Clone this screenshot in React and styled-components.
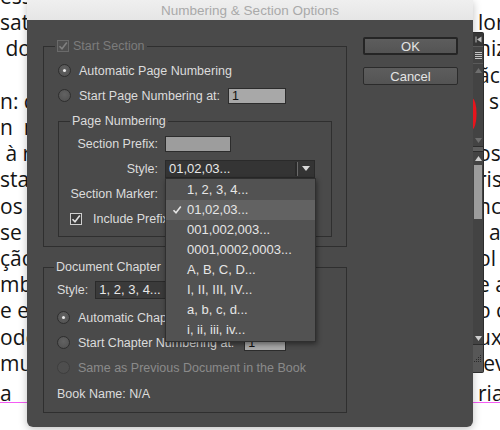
import React from 'react'
import styled, { createGlobalStyle } from 'styled-components'

const leftLines = ['esse', 'satu', ' do', '', 'n: co', 'n  m', ' à r', 'sta', 'os e', 'se c', 'ção', 'mb', 'e es', 'ode', 'mus', 'a']
const rightLines = ['', 'lor', 'niz', 'ãc', '  s', '', 'os', 'ris', 'nc', '  a', 'ol', 'e a', 'o c', 'uxe', 'lev', 'ria.']

const styles = ['1, 2, 3, 4...', '01,02,03...', '001,002,003...', '0001,0002,0003...', 'A, B, C, D...', 'I, II, III, IV...', 'a, b, c, d...', 'i, ii, iii, iv...']

const GlobalStyle = createGlobalStyle`
  html, body {
    margin: 0;
    padding: 0;
    background: #fff;
  }
  body {
    width: 500px;
    height: 430px;
    overflow: hidden;
  }
`

const Check = ({ color }) => (
  <svg width="10" height="10" viewBox="0 0 10 10">
    <path d="M1.5 5.2 L4 7.8 L8.8 1.6" fill="none" stroke={color} strokeWidth="1.6" />
  </svg>
)

const App = () => {
  return (
    <Page>
      <GlobalStyle />
      <DocText>
        {leftLines.map((line, i) => (
          <React.Fragment key={i}>
            <DocLine $last={i === leftLines.length - 1}>{line}</DocLine>
            <DocLine $last={i === leftLines.length - 1}>{rightLines[i]}</DocLine>
          </React.Fragment>
        ))}
      </DocText>
      <MagentaRule />

      <Dialog>
        <TitleBar>Numbering &amp; Section Options</TitleBar>
        <DialogBody>
          <MainColumn>
            <Group $pad="4px 14px 9px">
              <GroupLegend $shift={-3}>
                <CheckBox $disabled><Check color="#808080" /></CheckBox>
                <LegendText $disabled>Start Section</LegendText>
              </GroupLegend>
              <OptionRow><Radio $checked />Automatic Page Numbering</OptionRow>
              <OptionRow>
                <Radio />Start Page Numbering at:
                <TextBox $w={58} $gap={8}>1</TextBox>
              </OptionRow>

              <Group $top={5} $pad="2px 10px 5px 11px">
                <GroupLegend $shift={0}>Page Numbering</GroupLegend>
                <FieldRow>
                  <FieldLabel>Section Prefix:</FieldLabel>
                  <TextBox $w={66} $tone="#9d9d9d" />
                </FieldRow>
                <FieldRow>
                  <FieldLabel>Style:</FieldLabel>
                  <Dropdown>
                    <SelectBox $w={150} $dark>
                      01,02,03...
                      <ArrowZone>
                        <svg width="8" height="5" viewBox="0 0 8 5"><path d="M0 0 H8 L4 5 Z" fill="#d8d8d8" /></svg>
                      </ArrowZone>
                    </SelectBox>
                    <Menu>
                      {styles.map((s, i) => (
                        <MenuItem key={s} $active={i === 1}>
                          <MenuCheck>{i === 1 && <Check color="#e4e4e4" />}</MenuCheck>
                          {s}
                        </MenuItem>
                      ))}
                    </Menu>
                  </Dropdown>
                </FieldRow>
                <FieldRow>
                  <FieldLabel>Section Marker:</FieldLabel>
                  <TextBox $w={110} $tone="#9d9d9d" />
                </FieldRow>
                <FieldRow>
                  <CheckBox $light><Check color="#e0e0e0" /></CheckBox>
                  Include Prefix when Numbering Pages
                </FieldRow>
              </Group>
            </Group>

            <Group $top={12} $pad="4px 13px 6px">
              <GroupLegend $shift={-3}>Document Chapter Numbering</GroupLegend>
              <StyleRow>
                Style:
                <SelectBox $w={140} $gap={7}>1, 2, 3, 4...</SelectBox>
              </StyleRow>
              <OptionRow><Radio $checked />Automatic Chapter Numbering</OptionRow>
              <OptionRow>
                <Radio />Start Chapter Numbering at:
                <TextBox $w={42} $gap={10}>1</TextBox>
              </OptionRow>
              <OptionRow $disabled><Radio $disabled />Same as Previous Document in the Book</OptionRow>
              <BookRow>Book Name: N/A</BookRow>
            </Group>
          </MainColumn>

          <ButtonColumn>
            <DialogButton $primary>OK</DialogButton>
            <DialogButton>Cancel</DialogButton>
          </ButtonColumn>
        </DialogBody>
      </Dialog>

      <SideStrip>
        <StripCap>
          <svg width="7" height="7" viewBox="0 0 7 7">
            <path d="M1 0.5 V6.5" stroke="#bdbdbd" strokeWidth="1" />
            <path d="M6.5 0.5 V6.5 L2 3.5 Z" fill="#bdbdbd" />
          </svg>
        </StripCap>
        <StripMenu>
          <svg width="7" height="8" viewBox="0 0 7 8">
            <path d="M0 1.5 H7 M0 3.5 H7 M0 5.5 H7 M0 7.5 H7" stroke="#c4c4c4" strokeWidth="1" />
          </svg>
        </StripMenu>
        <ScrollPart $h={82}>
          <ArrowCell><svg width="7" height="5" viewBox="0 0 7 5"><path d="M0 5 H7 L3.5 0 Z" fill="#6e6e6e" /></svg></ArrowCell>
          <Track>
            <svg width="9" height="60" viewBox="0 0 9 60">
              <ellipse cx="-1" cy="39" rx="4.5" ry="16" fill="#e8141c" />
            </svg>
          </Track>
          <ArrowCell><svg width="7" height="5" viewBox="0 0 7 5"><path d="M0 0 H7 L3.5 5 Z" fill="#6e6e6e" /></svg></ArrowCell>
        </ScrollPart>
        <StripDivider />
        <ScrollPart>
          <ArrowCell><svg width="7" height="5" viewBox="0 0 7 5"><path d="M0 5 H7 L3.5 0 Z" fill="#cfcfcf" /></svg></ArrowCell>
          <Track>
            <Thumb />
          </Track>
          <ArrowCell><svg width="7" height="5" viewBox="0 0 7 5"><path d="M0 0 H7 L3.5 5 Z" fill="#cfcfcf" /></svg></ArrowCell>
        </ScrollPart>
        <Grip>
          <svg width="8" height="8" viewBox="0 0 8 8" fill="#2a2a2a">
            <rect x="6" y="0" width="1" height="1" />
            <rect x="4" y="2" width="1" height="1" /><rect x="6" y="2" width="1" height="1" />
            <rect x="2" y="4" width="1" height="1" /><rect x="4" y="4" width="1" height="1" /><rect x="6" y="4" width="1" height="1" />
            <rect x="0" y="6" width="1" height="1" /><rect x="2" y="6" width="1" height="1" /><rect x="4" y="6" width="1" height="1" /><rect x="6" y="6" width="1" height="1" />
          </svg>
        </Grip>
      </SideStrip>
    </Page>
  )
}

export default App

const Page = styled.div`
  position: relative;
  width: 500px;
  height: 430px;
  overflow: hidden;
  background: #fff;
`

const DocText = styled.div`
  display: grid;
  grid-template-columns: 478px 22px;
  margin-top: -17px;
  font-family: "Open Sans", sans-serif;
  font-size: 21px;
  line-height: 26.2px;
  color: #141414;
`

const DocLine = styled.div`
  white-space: pre;
  overflow: hidden;
  margin-top: ${p => (p.$last ? 4 : 0)}px;
`

const MagentaRule = styled.div`
  height: 1px;
  margin-top: -4px;
  background: #f45cf4;
`

const Dialog = styled.div`
  position: absolute;
  left: 27px;
  top: 0;
  width: 446px;
  height: 427px;
  display: flex;
  flex-direction: column;
  border-radius: 0 0 6px 6px;
  overflow: hidden;
  font-family: "Liberation Sans", Arial, sans-serif;
  font-size: 12.5px;
  color: #dcdcdc;
  box-shadow: 0 2px 8px rgba(0, 0, 0, 0.25);
`

const TitleBar = styled.div`
  height: 20px;
  line-height: 21px;
  text-align: center;
  font-size: 13.5px;
  color: #a9a9a9;
  background: linear-gradient(#efefef, #e6e6e6);
`

const DialogBody = styled.div`
  flex: 1;
  display: flex;
  gap: 16px;
  padding: 18px 15px 0 16px;
  background: #4a4a4a;
`

const MainColumn = styled.div`
  width: 304px;
  display: flex;
  flex-direction: column;
`

const Group = styled.fieldset`
  margin: ${p => p.$top || 0}px 0 0;
  padding: ${p => p.$pad};
  border: 1px solid #2f2f2f;
  min-width: 0;
`

const GroupLegend = styled.legend`
  display: flex;
  align-items: center;
  gap: 4px;
  height: 16px;
  line-height: 16px;
  margin-left: ${p => p.$shift}px;
  padding: 0 2px;
`

const LegendText = styled.span`
  color: ${p => (p.$disabled ? '#7c7c7c' : 'inherit')};
`

const CheckBox = styled.span`
  width: 12px;
  height: 12px;
  box-sizing: border-box;
  display: inline-flex;
  align-items: center;
  justify-content: center;
  flex-shrink: 0;
  border: 1px solid ${p => (p.$light ? '#cfcfcf' : '#6a6a6a')};
  background: ${p => (p.$light ? '#3d3d3d' : '#505050')};
  margin-right: ${p => (p.$light ? 4 : 0)}px;
`

const OptionRow = styled.div`
  height: 25px;
  display: flex;
  align-items: center;
  white-space: nowrap;
  color: ${p => (p.$disabled ? '#8a8a8a' : 'inherit')};
`

const Radio = styled.span`
  position: relative;
  width: 13px;
  height: 13px;
  box-sizing: border-box;
  margin-right: 8px;
  flex-shrink: 0;
  border-radius: 50%;
  border: 1px solid ${p => (p.$disabled ? '#3e3e3e' : '#2e2e2e')};
  background: ${p => (p.$disabled ? '#4e4e4e' : 'radial-gradient(circle at 50% 40%, #626262, #4f4f4f)')};

  &::after {
    content: '';
    display: ${p => (p.$checked ? 'block' : 'none')};
    position: absolute;
    left: 4px;
    top: 4px;
    width: 3px;
    height: 3px;
    border-radius: 50%;
    background: #ececec;
  }
`

const TextBox = styled.span`
  width: ${p => p.$w}px;
  height: 16px;
  box-sizing: border-box;
  margin-left: ${p => p.$gap || 0}px;
  padding-left: 3px;
  line-height: 14px;
  border: 1px solid #2c2c2c;
  background: ${p => p.$tone || '#a8a8a8'};
  color: #111;
  flex-shrink: 0;
`

const FieldRow = styled.div`
  height: 25px;
  display: flex;
  align-items: center;
  gap: 7px;
  white-space: nowrap;
`

const FieldLabel = styled.span`
  width: 88px;
  text-align: right;
  flex-shrink: 0;
`

const Dropdown = styled.div`
  position: relative;
  z-index: 2;
`

const SelectBox = styled.div`
  position: relative;
  width: ${p => p.$w}px;
  height: 18px;
  box-sizing: border-box;
  margin-left: ${p => p.$gap || 0}px;
  padding-left: 3px;
  line-height: 16px;
  border: 1px solid #2a2a2a;
  background: ${p => (p.$dark ? '#343434' : '#3a3a3a')};
  color: #e8e8e8;
  font-size: 13px;
  flex-shrink: 0;
`

const ArrowZone = styled.span`
  position: absolute;
  right: 0;
  top: 1px;
  bottom: 1px;
  width: 16px;
  display: flex;
  align-items: center;
  justify-content: center;
  border-left: 1px solid #6a6a6a;
  box-shadow: -2px 0 0 #2a2a2a;
`

const Menu = styled.div`
  position: absolute;
  left: 0;
  top: 18px;
  width: 151px;
  box-sizing: border-box;
  padding: 1px 0;
  background: #525252;
  border: 1px solid #2f2f2f;
  box-shadow: 1px 2px 5px rgba(0, 0, 0, 0.45);
`

const MenuItem = styled.div`
  height: 20px;
  display: flex;
  align-items: center;
  font-size: 13px;
  color: #e6e6e6;
  background: ${p => (p.$active ? '#626262' : 'transparent')};
`

const MenuCheck = styled.span`
  width: 21px;
  padding-left: 6px;
  box-sizing: border-box;
  display: flex;
  align-items: center;
`

const StyleRow = styled.div`
  height: 22px;
  margin-bottom: 4px;
  display: flex;
  align-items: center;
  white-space: nowrap;
`

const BookRow = styled.div`
  height: 25px;
  margin-top: 1px;
  display: flex;
  align-items: center;
`

const ButtonColumn = styled.div`
  width: 95px;
  margin-top: -1px;
  display: flex;
  flex-direction: column;
  gap: 12px;
`

const DialogButton = styled.div`
  height: 18px;
  box-sizing: border-box;
  display: flex;
  align-items: center;
  justify-content: center;
  font-size: 13px;
  color: #e4e4e4;
  border-radius: 2px;
  border: ${p => (p.$primary ? '2px solid #252525' : '1px solid #2b2b2b')};
  background: linear-gradient(#5d5d5d, #545454);
`

const SideStrip = styled.div`
  position: absolute;
  left: 473px;
  top: 32px;
  width: 11px;
  height: 341px;
  box-sizing: border-box;
  display: flex;
  flex-direction: column;
  background: #434343;
  border: 1px solid #2c2c2c;
  border-left: 0;
  border-radius: 0 2px 2px 0;
`

const StripCap = styled.div`
  height: 13px;
  display: flex;
  align-items: center;
  justify-content: center;
  background: #363636;
  border-bottom: 1px solid #5a5a5a;
`

const StripMenu = styled.div`
  height: 16px;
  display: flex;
  align-items: center;
  justify-content: center;
  border-bottom: 1px solid #5a5a5a;
`

const ScrollPart = styled.div`
  ${p => (p.$h ? `height: ${p.$h}px;` : 'flex: 1;')}
  display: flex;
  flex-direction: column;
`

const ArrowCell = styled.div`
  height: 12px;
  display: flex;
  align-items: center;
  justify-content: center;
`

const Track = styled.div`
  flex: 1;
  display: flex;
  flex-direction: column;
  overflow: hidden;
`

const Thumb = styled.div`
  height: 54px;
  margin: 1px 1px 0 1px;
  background: #9c9c9c;
`

const StripDivider = styled.div`
  height: 4px;
  background: #5e5e5e;
  border-top: 1px solid #2c2c2c;
  border-bottom: 1px solid #2c2c2c;
`

const Grip = styled.div`
  height: 27px;
  display: flex;
  align-items: center;
  justify-content: center;
  background: #575757;
  border-top: 1px solid #2c2c2c;
`
